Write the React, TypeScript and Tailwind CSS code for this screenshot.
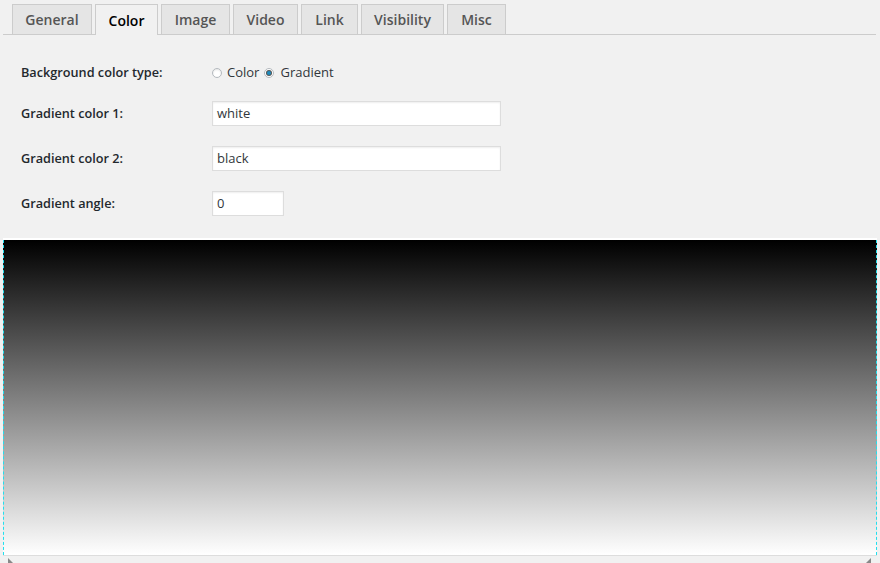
import React from 'react';

const tabs = [
  { label: 'General', w: 'w-[80px]' },
  { label: 'Color', w: 'w-[63px]' },
  { label: 'Image', w: 'w-[69px]' },
  { label: 'Video', w: 'w-[65px]' },
  { label: 'Link', w: 'w-[57px]' },
  { label: 'Visibility', w: 'w-[83px]' },
  { label: 'Misc', w: 'w-[59px]' },
];

function Row({ label, children }: { label: string; children: React.ReactNode }) {
  return (
    <div className="flex items-center h-[45px]">
      <label className="w-[191px] text-[12.7px] font-semibold text-[#23282d]">{label}</label>
      {children}
    </div>
  );
}

function Grip({ flip }: { flip?: boolean }) {
  return (
    <svg width="6" height="6" viewBox="0 0 6 6" className={flip ? '-scale-x-100' : ''}>
      <path d="M6 0 L6 6 L0 6 Z" fill="#888" />
    </svg>
  );
}

export default function App() {
  return (
    <div
      className="w-[880px] h-[563px] bg-[#f1f1f1] overflow-hidden relative"
      style={{ fontFamily: '"Open Sans", "Liberation Sans", sans-serif' }}
    >
      {/* Tabs */}
      <div className="flex gap-[3px] pl-[9px] pt-[4px] ml-[3px] mr-[4px] border-b border-[#cccccc] h-[35px]">
        {tabs.map((t) =>
          t.label === 'Color' ? (
            <div
              key={t.label}
              className={`${t.w} h-[31px] flex items-center justify-center border border-[#cccccc] border-b-0 bg-[#f1f1f1] text-[14px] font-semibold text-[#000] -mb-px`}
            >
              {t.label}
            </div>
          ) : (
            <div
              key={t.label}
              className={`${t.w} h-[30px] flex items-center justify-center border border-[#cccccc] border-b-0 bg-[#e5e5e5] text-[14px] font-semibold text-[#555555]`}
            >
              {t.label}
            </div>
          )
        )}
      </div>

      {/* Form */}
      <div className="pl-[21px] pt-[19px]">
        <div className="flex items-center h-[37px]">
          <label className="w-[191px] text-[12.7px] font-semibold text-[#23282d]">Background color type:</label>
          <div className="flex items-center text-[13px] text-[#32373c]">
            <span className="w-[10px] h-[10px] rounded-full border border-[#b4b9be] bg-white shadow-[inset_0_1px_2px_rgba(0,0,0,0.1)] mr-[5px]" />
            <span className="mr-[5px]">Color</span>
            <span className="w-[10px] h-[10px] rounded-full border border-[#b4b9be] bg-white flex items-center justify-center mr-[6px]">
              <span className="w-[4px] h-[4px] rounded-full bg-[#1e8cbe] ring-1 ring-[#555]" />
            </span>
            <span>Gradient</span>
          </div>
        </div>
        <Row label="Gradient color 1:">
          <div className="w-[289px] h-[25px] bg-white border border-[#dddddd] shadow-[inset_0_1px_2px_rgba(0,0,0,0.07)] px-[4px] flex items-center text-[13px] text-[#32373c]">
            white
          </div>
        </Row>
        <Row label="Gradient color 2:">
          <div className="w-[289px] h-[25px] bg-white border border-[#dddddd] shadow-[inset_0_1px_2px_rgba(0,0,0,0.07)] px-[4px] flex items-center text-[13px] text-[#32373c]">
            black
          </div>
        </Row>
        <Row label="Gradient angle:">
          <div className="w-[72px] h-[25px] bg-white border border-[#dddddd] shadow-[inset_0_1px_2px_rgba(0,0,0,0.07)] px-[4px] flex items-center text-[13px] text-[#32373c]">
            0
          </div>
        </Row>
      </div>

      {/* Preview */}
      <div className="ml-[3px] mr-[3px] mt-[12px] border-t-2 border-white border-b border-b-[#dddddd]">
        <div className="h-[315px] border-x border-dashed border-x-[#22e0ee] bg-[linear-gradient(0deg,white,black)]" />
      </div>
      <div className="flex justify-between pl-[8px] pr-[9px] pt-[2px]">
        <Grip flip />
        <Grip />
      </div>
    </div>
  );
}
